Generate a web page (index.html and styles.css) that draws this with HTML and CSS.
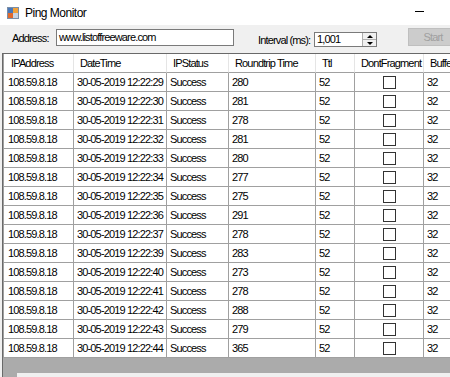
FILE: index.html
```html
<!DOCTYPE html>
<html lang="en">
<head>
<meta charset="UTF-8" />
<title>Ping Monitor</title>
<link rel="stylesheet" href="styles.css">
</head>
<body>

  <div class="titlebar">
    <svg class="app-icon" viewBox="0 0 12 12" width="12" height="12">
      <rect x="0.5" y="0.5" width="11" height="11" fill="#dfe6ee" stroke="#7b8ea6"/>
      <rect x="1" y="1" width="5" height="5" fill="#4a78b8"/>
      <rect x="6" y="1" width="5" height="5" fill="#f2a23a"/>
      <rect x="1" y="6" width="5" height="5" fill="#e06a2c"/>
      <rect x="6" y="6" width="5" height="5" fill="#c8d4e2"/>
    </svg>
    <span class="title">Ping Monitor</span>
    <span class="minimize"></span>
  </div>

  <div class="toolbar">
    <span class="field-label address-label">Address:</span>
    <div class="textbox">www.listoffreeware.com</div>
    <span class="field-label interval-label">Interval (ms):</span>
    <div class="spinner">
      <span class="spin-value">1,001</span>
      <div class="spin-buttons">
        <span class="spin-btn"><span class="arrow-up"></span></span>
        <span class="spin-btn"><span class="arrow-down"></span></span>
      </div>
    </div>
    <button class="start-button" disabled>Start</button>
  </div>

  <div class="grid">
    <table class="ping-table">
      <colgroup>
        <col style="width:71px"><col style="width:93px"><col style="width:62px"><col style="width:87px">
        <col style="width:39px"><col style="width:69px"><col style="width:99px">
      </colgroup>
      <thead>
        <tr>
          <th>IPAddress</th><th>DateTime</th><th>IPStatus</th><th>Roundtrip Time</th>
          <th>Ttl</th><th>DontFragment</th><th>Buffer</th>
        </tr>
      </thead>
      <tbody>
        <tr><td>108.59.8.18</td><td>30-05-2019 12:22:29</td><td>Success</td><td>280</td><td>52</td><td class="check-cell"><span class="checkbox"></span></td><td>32</td></tr>
        <tr><td>108.59.8.18</td><td>30-05-2019 12:22:30</td><td>Success</td><td>281</td><td>52</td><td class="check-cell"><span class="checkbox"></span></td><td>32</td></tr>
        <tr><td>108.59.8.18</td><td>30-05-2019 12:22:31</td><td>Success</td><td>278</td><td>52</td><td class="check-cell"><span class="checkbox"></span></td><td>32</td></tr>
        <tr><td>108.59.8.18</td><td>30-05-2019 12:22:32</td><td>Success</td><td>281</td><td>52</td><td class="check-cell"><span class="checkbox"></span></td><td>32</td></tr>
        <tr><td>108.59.8.18</td><td>30-05-2019 12:22:33</td><td>Success</td><td>280</td><td>52</td><td class="check-cell"><span class="checkbox"></span></td><td>32</td></tr>
        <tr><td>108.59.8.18</td><td>30-05-2019 12:22:34</td><td>Success</td><td>277</td><td>52</td><td class="check-cell"><span class="checkbox"></span></td><td>32</td></tr>
        <tr><td>108.59.8.18</td><td>30-05-2019 12:22:35</td><td>Success</td><td>275</td><td>52</td><td class="check-cell"><span class="checkbox"></span></td><td>32</td></tr>
        <tr><td>108.59.8.18</td><td>30-05-2019 12:22:36</td><td>Success</td><td>291</td><td>52</td><td class="check-cell"><span class="checkbox"></span></td><td>32</td></tr>
        <tr><td>108.59.8.18</td><td>30-05-2019 12:22:37</td><td>Success</td><td>278</td><td>52</td><td class="check-cell"><span class="checkbox"></span></td><td>32</td></tr>
        <tr><td>108.59.8.18</td><td>30-05-2019 12:22:39</td><td>Success</td><td>283</td><td>52</td><td class="check-cell"><span class="checkbox"></span></td><td>32</td></tr>
        <tr><td>108.59.8.18</td><td>30-05-2019 12:22:40</td><td>Success</td><td>273</td><td>52</td><td class="check-cell"><span class="checkbox"></span></td><td>32</td></tr>
        <tr><td>108.59.8.18</td><td>30-05-2019 12:22:41</td><td>Success</td><td>278</td><td>52</td><td class="check-cell"><span class="checkbox"></span></td><td>32</td></tr>
        <tr><td>108.59.8.18</td><td>30-05-2019 12:22:42</td><td>Success</td><td>288</td><td>52</td><td class="check-cell"><span class="checkbox"></span></td><td>32</td></tr>
        <tr><td>108.59.8.18</td><td>30-05-2019 12:22:43</td><td>Success</td><td>279</td><td>52</td><td class="check-cell"><span class="checkbox"></span></td><td>32</td></tr>
        <tr><td>108.59.8.18</td><td>30-05-2019 12:22:44</td><td>Success</td><td>365</td><td>52</td><td class="check-cell"><span class="checkbox"></span></td><td>32</td></tr>
      </tbody>
    </table>
    <div class="h-scroll"></div>
  </div>

</body>
</html>
```

FILE: styles.css
```css
* {
  box-sizing: border-box;
}

body {
  margin: 0;
  width: 450px;
  height: 377px;
  overflow: hidden;
  background-color: #f0f0f0;
  color: #000000;
  font-family: "Liberation Sans", Arial, sans-serif;
  font-size: 11px;
  letter-spacing: -0.85px;
}

/* Window title bar */
.titlebar {
  height: 25px;
  background-color: #ffffff;
  display: flex;
  align-items: center;
  padding-left: 7px;
}
.app-icon {
  margin-right: 6px;
  margin-top: 1px;
}
.title {
  font-size: 12px;
  letter-spacing: -0.5px;
}
.minimize {
  align-self: flex-start;
  margin-top: 11px;
  margin-left: auto;
  margin-right: 26px;
  width: 9px;
  height: 1px;
  background-color: #000000;
}

/* Address / interval row */
.toolbar {
  height: 28px;
  display: flex;
  align-items: flex-start;
}
.toolbar > * {
  flex-shrink: 0;
}
.field-label {
  line-height: 13px;
  margin-top: 7px;
}
.address-label {
  width: 44px;
  margin-left: 12px;
}
.textbox {
  width: 178px;
  height: 17px;
  margin-top: 4px;
  border: 1px solid #7a7a7a;
  background-color: #ffffff;
  padding: 1px 0 0 2px;
  line-height: 13px;
}
.interval-label {
  width: 56px;
  margin-left: 24px;
  margin-top: 9px;
}
.spinner {
  width: 63px;
  height: 15px;
  margin-top: 7px;
  border: 1px solid #7a7a7a;
  background-color: #ffffff;
  display: flex;
}
.spin-value {
  flex: 1;
  padding-left: 2px;
  line-height: 13px;
}
.spin-buttons {
  width: 14px;
  display: flex;
  flex-direction: column;
  border-left: 1px solid #adadad;
}
.spin-btn {
  flex: 1;
  display: flex;
  align-items: center;
  justify-content: center;
  background-color: #f0f0f0;
}
.spin-btn + .spin-btn {
  border-top: 1px solid #adadad;
}
.arrow-up {
  border-left: 3px solid transparent;
  border-right: 3px solid transparent;
  border-bottom: 3px solid #000000;
}
.arrow-down {
  border-left: 3px solid transparent;
  border-right: 3px solid transparent;
  border-top: 3px solid #000000;
}
.start-button {
  width: 50px;
  height: 18px;
  margin-left: 31px;
  margin-top: 3px;
  padding: 0;
  background-color: #cccccc;
  border: 1px solid #bfbfbf;
  color: #a0a0a0;
  font: inherit;
  letter-spacing: inherit;
}

/* Data grid */
.grid {
  height: 324px;
  margin-left: 2px;
  border-left: 1px solid #696969;
  border-top: 1px solid #696969;
  background-color: #ababab;
  overflow: hidden;
}
.ping-table {
  border-collapse: separate;
  border-spacing: 0;
  table-layout: fixed;
  width: 520px;
}
.ping-table th {
  height: 19px;
  padding: 0 0 0 6px;
  background-color: #ffffff;
  font-weight: normal;
  text-align: left;
  white-space: nowrap;
  border-right: 1px solid #e5e5e5;
  border-bottom: 1px solid #a0a0a0;
}
.ping-table th:first-child {
  padding-left: 7px;
  border-left: 1px solid #a0a0a0;
}
.ping-table td {
  height: 19px;
  padding: 0 0 0 3px;
  background-color: #ffffff;
  white-space: nowrap;
  overflow: hidden;
  border-right: 1px solid #a0a0a0;
  border-bottom: 1px solid #a0a0a0;
}
.ping-table td:first-child {
  padding-left: 4px;
  border-left: 1px solid #a0a0a0;
}
.ping-table td.check-cell {
  padding: 0;
  text-align: center;
}
.checkbox {
  display: inline-block;
  width: 13px;
  height: 13px;
  border: 1px solid #333333;
  background-color: #ffffff;
  vertical-align: middle;
}

.h-scroll {
  height: 17px;
  margin-top: 15px;
  margin-left: 14px;
  background-color: #f0f0f0;
}
```
